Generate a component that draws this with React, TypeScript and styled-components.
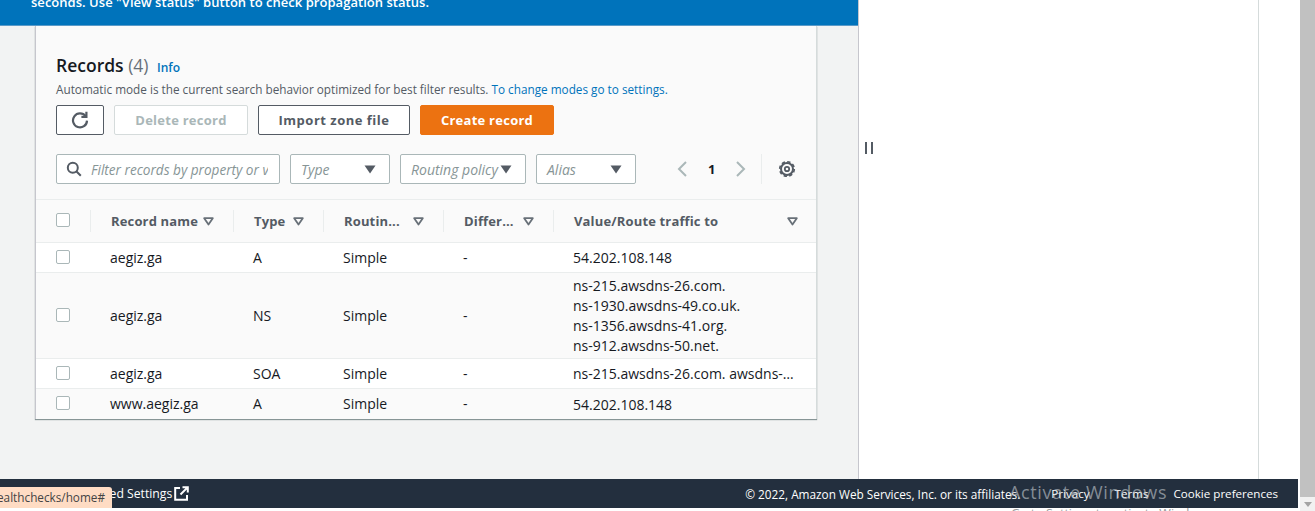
import React from "react";
import styled, { createGlobalStyle } from "styled-components";

const records = [
  { name: "aegiz.ga", type: "A", value: ["54.202.108.148"] },
  {
    name: "aegiz.ga",
    type: "NS",
    value: [
      "ns-215.awsdns-26.com.",
      "ns-1930.awsdns-49.co.uk.",
      "ns-1356.awsdns-41.org.",
      "ns-912.awsdns-50.net.",
    ],
  },
  { name: "aegiz.ga", type: "SOA", value: ["ns-215.awsdns-26.com. awsdns-hostmaster.amazon.com."] },
  { name: "www.aegiz.ga", type: "A", value: ["54.202.108.148"] },
];

const columns = ["Record name", "Type", "Routin...", "Differ...", "Value/Route traffic to"];

const SortIcon = () => (
  <svg width="11" height="9" viewBox="0 0 11 9">
    <path d="M1.2 1.2h8.6L5.5 7.600z" fill="none" stroke="#687078" strokeWidth="1.8" strokeLinejoin="round" />
  </svg>
);

const Caret = () => (
  <svg width="12" height="9" viewBox="0 0 12 9">
    <path d="M0.5 0.5h11L6 8.500z" fill="#545b64" />
  </svg>
);

export default function App() {
  return (
    <Frame>
      <GlobalStyle />
      <Column>
        <Upper>
          <Main>
            <Flash>
              <span>seconds. Use "View status" button to check propagation status.</span>
            </Flash>
            <Card>
              <Title>
                Records <Count>(4)</Count> <InfoLink>Info</InfoLink>
              </Title>
              <Description>
                Automatic mode is the current search behavior optimized for best filter results.{" "}
                <DescriptionLink>To change modes go to settings.</DescriptionLink>
              </Description>
              <Actions>
                <Button $variant="icon" aria-label="Refresh">
                  <svg width="18" height="18" viewBox="0 0 18 18" fill="none">
                    <path d="M14.6 5.2A7 7 0 1 0 16 9.600" stroke="#545b64" strokeWidth="2.2" />
                    <path d="M15.4 0.8v5h-5" stroke="#545b64" strokeWidth="2.2" />
                  </svg>
                </Button>
                <Button $variant="disabled" $width={134}>Delete record</Button>
                <ImportButton $width={152}>Import zone file</ImportButton>
                <Button $variant="primary" $width={134}>Create record</Button>
              </Actions>
              <Filters>
                <SearchBox>
                  <svg width="16" height="16" viewBox="0 0 16 16" fill="none">
                    <circle cx="6.8" cy="6.8" r="5" stroke="#545b64" strokeWidth="2" />
                    <path d="M10.5 10.5l4.3 4.3" stroke="#545b64" strokeWidth="2" />
                  </svg>
                  <SearchText>Filter records by property or value</SearchText>
                </SearchBox>
                <Select $width={100}>
                  <Placeholder>Type</Placeholder>
                  <Caret />
                </Select>
                <Select $width={126}>
                  <Placeholder>Routing policy</Placeholder>
                  <Caret />
                </Select>
                <Select $width={100}>
                  <Placeholder>Alias</Placeholder>
                  <Caret />
                </Select>
                <Pager>
                  <svg width="12" height="18" viewBox="0 0 12 18" fill="none">
                    <path d="M10 2L3 9l7 7" stroke="#aab7b8" strokeWidth="2" />
                  </svg>
                  <PageNumber>1</PageNumber>
                  <svg width="12" height="18" viewBox="0 0 12 18" fill="none">
                    <path d="M2 2l7 7-7 7" stroke="#aab7b8" strokeWidth="2" />
                  </svg>
                </Pager>
                <Preferences>
                  <svg width="18" height="18" viewBox="0 0 18 18" fill="none">
                    <circle cx="9" cy="9" r="6" stroke="#545b64" strokeWidth="2" />
                    <circle cx="9" cy="9" r="7.3" stroke="#545b64" strokeWidth="1.6" strokeDasharray="3.4 2.33" />
                    <circle cx="9" cy="9" r="2.2" stroke="#545b64" strokeWidth="1.8" />
                  </svg>
                </Preferences>
              </Filters>
              <HeadRow>
                <HeadCheck>
                  <Checkbox />
                </HeadCheck>
                {columns.map((label) => (
                  <HeadCell key={label}>
                    <span>{label}</span>
                    <SortIcon />
                  </HeadCell>
                ))}
              </HeadRow>
              {records.map((r, i) => (
                <Row key={i} $odd={i % 2 === 1}>
                  <CheckCell>
                    <Checkbox />
                  </CheckCell>
                  <Cell>{r.name}</Cell>
                  <Cell>{r.type}</Cell>
                  <Cell>Simple</Cell>
                  <Cell>-</Cell>
                  <ValueCell>
                    {r.value.map((v) => (
                      <ValueLine key={v}>{v}</ValueLine>
                    ))}
                  </ValueCell>
                </Row>
              ))}
            </Card>
          </Main>
          <SidePanel>
            <PanelHandle />
          </SidePanel>
          <Gutter />
        </Upper>
        <Footer>
          <FooterLeft>
            Unified Settings
            <svg width="15" height="15" viewBox="0 0 15 15" fill="none">
              <path d="M6 2H1.200v11.800H13V9" stroke="#fff" strokeWidth="2" />
              <path d="M8.500 1.200h5.300v5.300M13.600 1.400L6.500 8.500" stroke="#fff" strokeWidth="2" />
            </svg>
          </FooterLeft>
          <FooterRight>
            <Copyright>© 2022, Amazon Web Services, Inc. or its affiliates.</Copyright>
            <span>Privacy</span>
            <span>Terms</span>
            <span>Cookie preferences</span>
          </FooterRight>
        </Footer>
        <BelowFooter />
      </Column>
      <Scrollbar>
        <ScrollThumb />
        <ScrollDown />
      </Scrollbar>
      <StatusTip>
        <span>https://console.aws.amazon.com/route53/healthchecks/home#</span>
      </StatusTip>
      <Watermark>
        <WatermarkTitle>Activate Windows</WatermarkTitle>
        <WatermarkSub>Go to Settings to activate Windows.</WatermarkSub>
      </Watermark>
    </Frame>
  );
}

const GlobalStyle = createGlobalStyle`
  html, body {
    margin: 0;
    padding: 0;
    height: 511px;
    overflow: hidden;
    background: #fff;
  }
  * {
    box-sizing: border-box;
  }
`;

const Frame = styled.div`
  position: relative;
  display: flex;
  width: 1315px;
  height: 511px;
  overflow: hidden;
  font-family: "Open Sans", "Noto Sans", "Liberation Sans", sans-serif;
  font-size: 13px;
  color: #16191f;
`;

const Column = styled.div`
  flex: 1;
  min-width: 0;
  display: flex;
  flex-direction: column;
`;

const Upper = styled.div`
  display: flex;
  height: 479px;
`;

const Main = styled.main`
  width: 858px;
  background: #f2f3f3;
`;

const Flash = styled.div`
  height: 26px;
  padding-left: 31px;
  display: flex;
  align-items: flex-end;
  overflow: hidden;
  background: #0073bb;
  border-bottom: 1px solid #5a9ac8;
  color: #fff;
  font-size: 13px;
  font-weight: 600;
  letter-spacing: 0.03px;
  line-height: 20px;

  span {
    display: block;
    margin-bottom: 13px;
    white-space: nowrap;
  }
`;

const Card = styled.section`
  width: 782px;
  margin-left: 35px;
  background: #fafafa;
  border-left: 1px solid #c6c6cd;
  border-right: 1px solid #d5dbdb;
  box-shadow: 0 1px 1px #879596;
  padding-top: 27px;
`;

const Title = styled.h2`
  margin: 0 0 0 20px;
  font-size: 17.5px;
  line-height: 24px;
  font-weight: 600;
  color: #16191f;
`;

const Count = styled.span`
  font-weight: 400;
  color: #687078;
`;

const InfoLink = styled.a`
  margin-left: 4px;
  font-size: 12px;
  font-weight: 600;
  color: #0073bb;
`;

const Description = styled.p`
  margin: 0 0 0 20px;
  font-size: 11.75px;
  line-height: 18px;
  color: #545b64;
`;

const DescriptionLink = styled.a`
  color: #0073bb;
`;

const Actions = styled.div`
  display: flex;
  gap: 10px;
  margin: 7px 0 0 20px;
`;

const Button = styled.button<{ $variant?: "icon" | "disabled" | "primary"; $width?: number }>`
  width: ${(p) => (p.$variant === "icon" ? 48 : p.$width)}px;
  height: 30px;
  padding: 0;
  display: flex;
  align-items: center;
  justify-content: center;
  border-radius: 2px;
  border: 1px solid
    ${(p) =>
      p.$variant === "primary" ? "#ec7211" : p.$variant === "disabled" ? "#d5dbdb" : "#545b64"};
  background: ${(p) => (p.$variant === "primary" ? "#ec7211" : "#fff")};
  color: ${(p) =>
    p.$variant === "primary" ? "#fff" : p.$variant === "disabled" ? "#aab7b8" : "#545b64"};
  font-family: inherit;
  font-size: 13px;
  font-weight: 700;
  letter-spacing: 0.25px;
`;

const ImportButton = styled(Button)`
  letter-spacing: 0.5px;
`;

const Filters = styled.div`
  display: flex;
  align-items: center;
  gap: 10px;
  height: 30px;
  margin: 19px 0 0 20px;
`;

const SearchBox = styled.div`
  width: 224px;
  height: 30px;
  display: flex;
  align-items: center;
  gap: 9px;
  padding: 0 11px 0 9px;
  background: #fff;
  border: 1px solid #aab7b8;
  border-radius: 2px;
  flex: none;

  svg {
    flex: none;
  }
`;

const SearchText = styled.span`
  overflow: hidden;
  white-space: nowrap;
  font-size: 13.6px;
  font-style: italic;
  color: #879596;
`;

const Select = styled.div<{ $width: number }>`
  width: ${(p) => p.$width}px;
  height: 30px;
  flex: none;
  display: flex;
  align-items: center;
  justify-content: space-between;
  padding: 0 13px 0 10px;
  background: #fff;
  border: 1px solid #aab7b8;
  border-radius: 2px;
`;

const Placeholder = styled.span`
  font-size: 14px;
  font-style: italic;
  color: #879596;
  white-space: nowrap;
`;

const Pager = styled.div`
  display: flex;
  align-items: center;
  gap: 20px;
  margin-left: 30px;
`;

const PageNumber = styled.span`
  font-size: 13px;
  font-weight: 700;
  color: #16191f;
`;

const Preferences = styled.div`
  height: 30px;
  margin-left: 4px;
  padding-left: 16px;
  display: flex;
  align-items: center;
  border-left: 1px solid #eaeded;
`;

const tableColumns = "54px 143px 90px 120px 110px 1fr";

const HeadRow = styled.div`
  display: grid;
  grid-template-columns: ${tableColumns};
  height: 44px;
  margin-top: 15px;
  border-top: 1px solid #eaeded;
  border-bottom: 1px solid #eaeded;
  align-items: center;
`;

const CheckCell = styled.div`
  display: flex;
  align-items: center;
  padding-left: 20px;
`;

const HeadCheck = styled(CheckCell)`
  padding-bottom: 1px;
`;

const Checkbox = styled.span`
  display: block;
  width: 14px;
  height: 14px;
  margin-bottom: 2px;
  background: #fff;
  border: 1px solid #aab7b8;
  border-radius: 2px;
`;

const HeadCell = styled.div`
  height: 22px;
  display: flex;
  align-items: center;
  justify-content: space-between;
  padding: 0 19px 0 20px;
  border-left: 1px solid #eaeded;
  font-size: 13px;
  font-weight: 700;
  letter-spacing: 0.15px;
  color: #545b64;
  white-space: nowrap;

  &:last-child {
    padding-right: 18px;
  }
`;

const Row = styled.div<{ $odd: boolean }>`
  display: grid;
  grid-template-columns: ${tableColumns};
  align-items: center;
  min-height: 30px;
  background: ${(p) => (p.$odd ? "#fafafa" : "#fff")};
  border-bottom: 1px solid #eaeded;

  &:last-child {
    border-bottom: 0;
  }
`;

const Cell = styled.div`
  padding-left: 20px;
  font-size: 14px;
  line-height: 20px;
  color: #16191f;
`;

const ValueCell = styled(Cell)`
  padding: 3px 20px 2px 20px;
  min-width: 0;
`;

const ValueLine = styled.div`
  white-space: nowrap;
  overflow: hidden;
  text-overflow: ellipsis;
`;

const SidePanel = styled.aside`
  position: relative;
  width: 401px;
  background: #fff;
  border-left: 1px solid #c6c6cd;
  border-right: 1px solid #d5dbdb;
`;

const PanelHandle = styled.div`
  position: absolute;
  left: 6px;
  top: 142px;
  width: 8px;
  height: 12px;
  border-left: 2px solid #545b64;
  border-right: 2px solid #545b64;
`;

const Gutter = styled.div`
  flex: 1;
  background: #fff;
`;

const Footer = styled.footer`
  height: 29px;
  display: flex;
  align-items: center;
  justify-content: space-between;
  padding: 0 20px 0 0;
  background: #232f3e;
  color: #fff;
  font-size: 11.6px;
`;

const FooterLeft = styled.div`
  display: flex;
  align-items: center;
  gap: 2px;
  margin-left: 83px;
  font-size: 12.2px;
  font-weight: 500;
  white-space: nowrap;
`;

const FooterRight = styled.div`
  display: flex;
  gap: 25px;
  white-space: nowrap;
`;

const Copyright = styled.span`
  margin-right: 6px;
  font-size: 11.8px;
`;

const BelowFooter = styled.div`
  flex: 1;
  background: #fff;
`;

const Scrollbar = styled.div`
  width: 17px;
  padding-left: 2px;
  display: flex;
  flex-direction: column;
  background: #fff;
`;

const ScrollThumb = styled.div`
  flex: 1;
  background: #c1c1c1;
`;

const ScrollDown = styled.div`
  height: 14px;
  display: flex;
  align-items: center;
  justify-content: center;
  background: #f1f1f1;

  &::after {
    content: "";
    border-left: 4px solid transparent;
    border-right: 4px solid transparent;
    border-top: 5px solid #a3a3a3;
  }
`;

const StatusTip = styled.div`
  position: absolute;
  left: 0;
  top: 487px;
  width: 112px;
  height: 21px;
  padding-right: 7px;
  display: flex;
  justify-content: flex-end;
  background: #ffdcc4;
  border-radius: 0 3px 0 0;
  color: #444;
  font-size: 11.75px;
  line-height: 21px;
  white-space: nowrap;
  overflow: hidden;

  span {
    flex: none;
  }
`;

const Watermark = styled.div`
  position: absolute;
  left: 1009px;
  top: 479px;
  pointer-events: none;
  color: rgba(200, 205, 210, 0.6);
  white-space: nowrap;
`;

const WatermarkTitle = styled.div`
  font-size: 18px;
  line-height: 26px;
  letter-spacing: 0.65px;
`;

const WatermarkSub = styled.div`
  margin: 1px 0 0 2px;
  font-size: 12.5px;
  line-height: 16px;
  color: #999;
`;
